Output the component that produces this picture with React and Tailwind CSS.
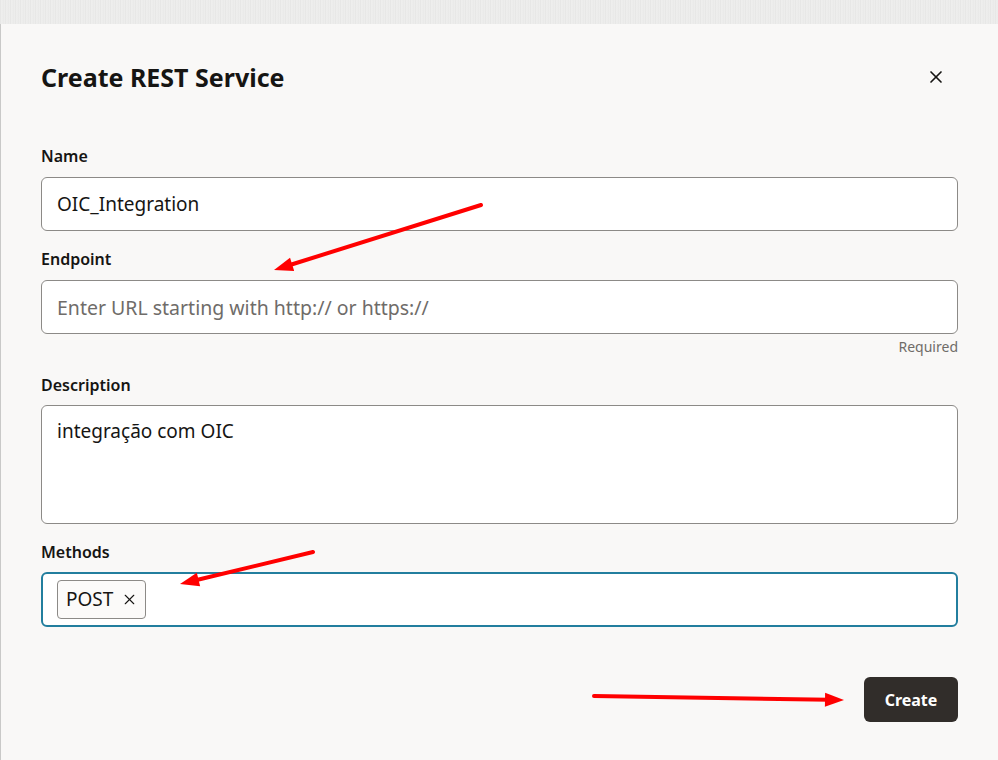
import { X } from "lucide-react";

const arrows = [
  { from: [481, 205], to: [274, 270] },
  { from: [313, 552], to: [180, 584] },
  { from: [594, 696], to: [844, 700] },
];

function Arrow({ from, to }) {
  const [x1, y1] = from;
  const [x2, y2] = to;
  const ang = Math.atan2(y2 - y1, x2 - x1);
  const len = 19;
  const half = 7;
  const bx = x2 - len * Math.cos(ang);
  const by = y2 - len * Math.sin(ang);
  const px = -Math.sin(ang) * half;
  const py = Math.cos(ang) * half;
  return (
    <g>
      <line x1={x1} y1={y1} x2={bx + Math.cos(ang) * 4} y2={by + Math.sin(ang) * 4} stroke="#ff0000" strokeWidth="4" strokeLinecap="round" />
      <polygon points={`${x2},${y2} ${bx + px},${by + py} ${bx - px},${by - py}`} fill="#ff0000" />
    </g>
  );
}

const labelCls = "text-[16px] leading-[20px] font-semibold text-[#161513]";
const inputCls =
  "w-full rounded-[6px] border border-[#8c8a87] bg-white px-[15px] text-[#161513] outline-none";

export default function App() {
  return (
    <div className="relative flex h-[760px] w-[998px] flex-col overflow-hidden bg-[#ebebea] font-['Noto_Sans',sans-serif]">
      <div className="h-[24px] shrink-0 bg-[repeating-linear-gradient(90deg,#e4e4e3_0px,#f1f1f0_2px,#e8e8e7_3px,#efefee_5px)]" />
      <div className="flex flex-1 flex-col border-l border-[#c9c9c8] bg-[#f9f8f7] pl-[40px] pr-[40px]">
        <header className="flex items-start justify-between pt-[37px]">
          <h2 className="text-[25px] leading-[32px] font-bold text-[#161513]">Create REST Service</h2>
          <button className="mr-[6px] flex h-8 w-8 items-center justify-center text-[#161513]">
            <X size={20} strokeWidth={2} />
          </button>
        </header>

        <div className="mt-[53px]">
          <div className={labelCls}>Name</div>
          <input className={`${inputCls} mt-[11px] h-[54px] text-[19px]`} defaultValue="OIC_Integration" />
        </div>

        <div className="mt-[18px]">
          <div className={labelCls}>Endpoint</div>
          <input
            className={`${inputCls} mt-[11px] h-[54px] text-[19.5px] placeholder:text-[#6f6c69]`}
            placeholder="Enter URL starting with http:// or https://"
          />
          <div className="mt-[4px] text-right text-[14px] leading-[18px] text-[#6f6c69]">Required</div>
        </div>

        <div className="mt-[19px]">
          <div className={labelCls}>Description</div>
          <textarea
            className={`${inputCls} mt-[10px] block h-[119px] resize-none pt-[12px] text-[19px] leading-[26px]`}
            defaultValue="integração com OIC"
          />
        </div>

        <div className="mt-[18px]">
          <div className={labelCls}>Methods</div>
          <div className="mt-[10px] flex h-[55px] items-center rounded-[6px] border-2 border-[#227e9e] bg-white px-[14px]">
            <span className="flex h-[39px] items-center gap-[8px] rounded-[4px] border border-[#8c8a87] bg-[#fbfaf9] pl-[8px] pr-[7px] text-[19px] text-[#161513]">
              POST
              <X size={17} strokeWidth={1.6} />
            </span>
          </div>
        </div>

        <div className="mt-[50px] flex justify-end">
          <button className="h-[45px] w-[94px] rounded-[6px] bg-[#312d2a] text-[16px] font-bold text-white">
            Create
          </button>
        </div>
      </div>

      <svg className="pointer-events-none absolute left-0 top-0" width="998" height="760">
        {arrows.map((a, i) => (
          <Arrow key={i} {...a} />
        ))}
      </svg>
    </div>
  );
}
